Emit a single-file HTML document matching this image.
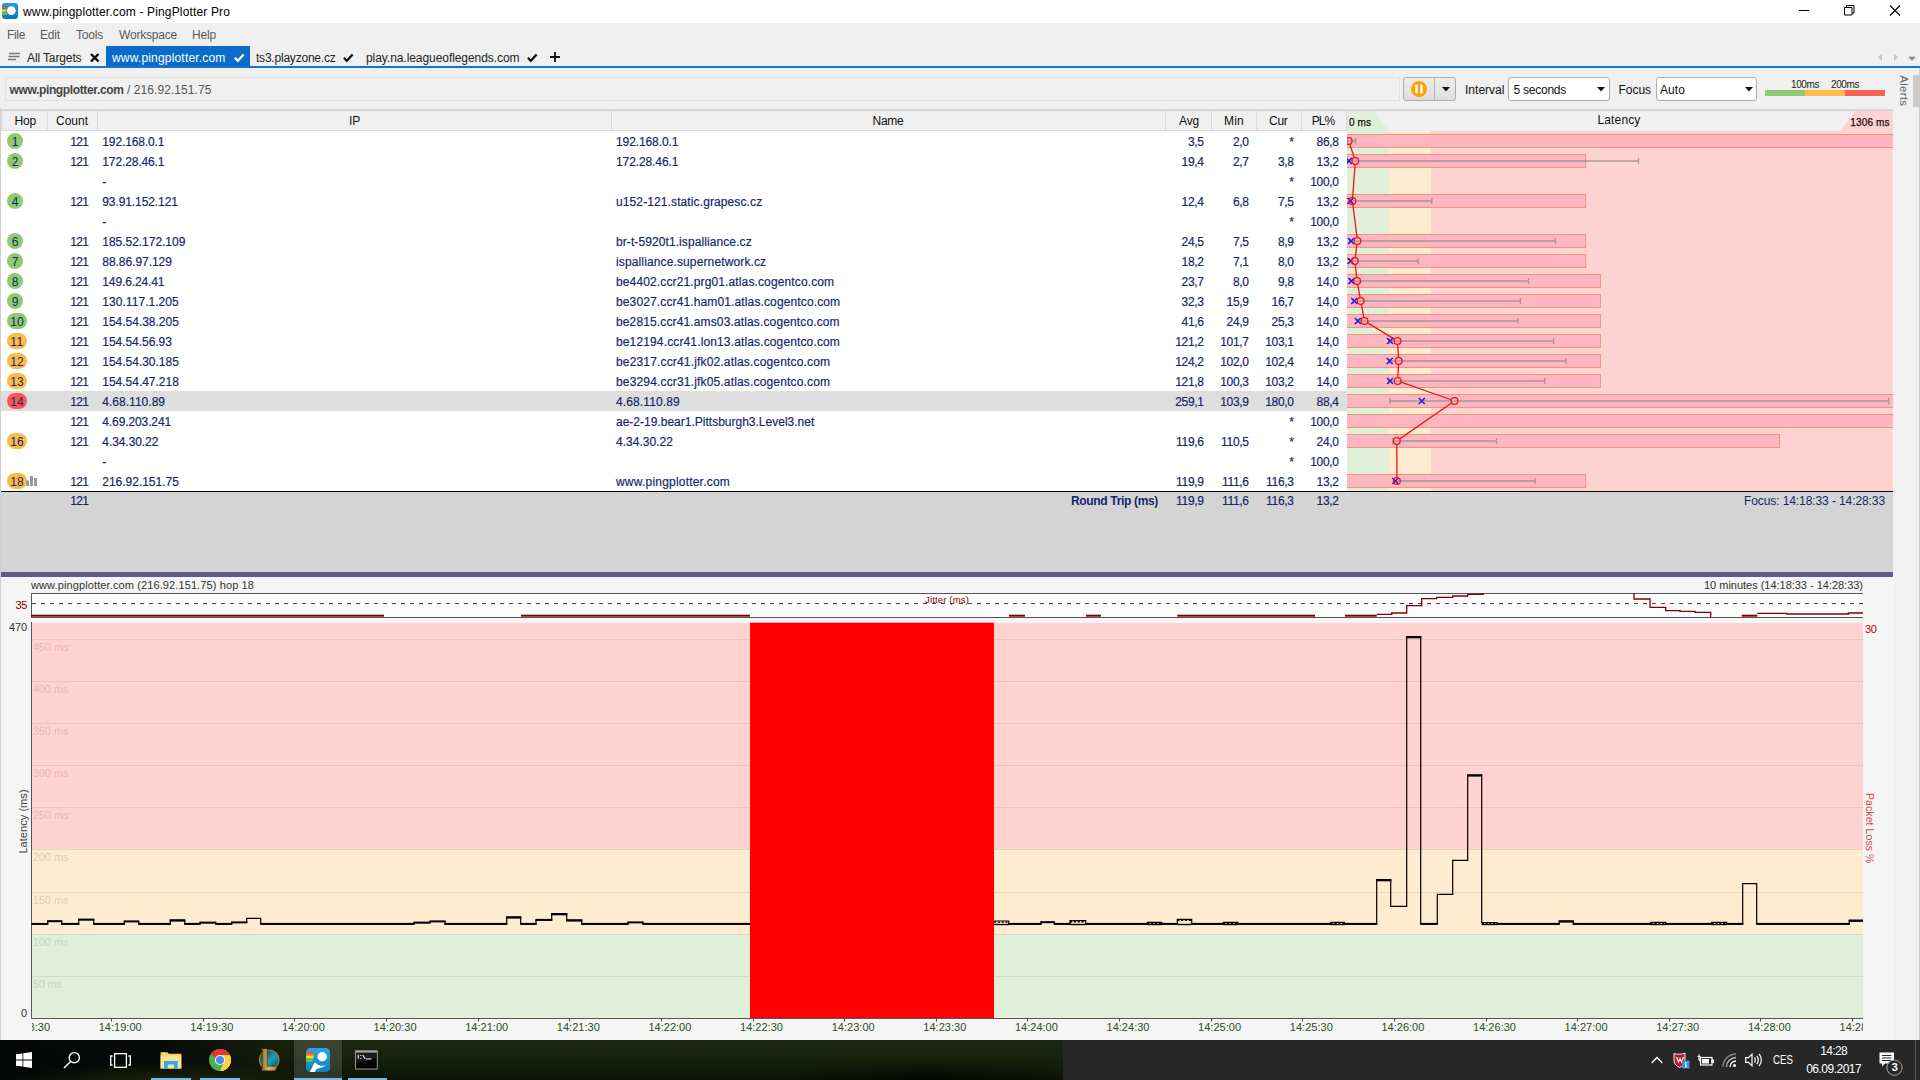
<!DOCTYPE html>
<html><head><meta charset="utf-8"><title>PingPlotter</title>
<style>
html,body{margin:0;padding:0;}
body{width:1920px;height:1080px;overflow:hidden;position:relative;background:#f0f0f0;font-family:"Liberation Sans",sans-serif;}
.t{position:absolute;white-space:nowrap;}
.b{position:absolute;}
svg{position:absolute;overflow:visible;}
</style></head><body>
<div class="b" style="left:0px;top:0px;width:1920px;height:23px;background:#fff;"></div>
<svg style="left:2px;top:3px" width="16" height="16" viewBox="0 0 16 16"><defs><linearGradient id="tg" x1="0" y1="0" x2="0" y2="1"><stop offset="0" stop-color="#1e9fdb"/><stop offset="1" stop-color="#0a78bc"/></linearGradient></defs>
<rect x="0" y="0" width="16" height="16" rx="3" fill="url(#tg)"/>
<path d="M0 3.400h5.600l-1 2.300H0z" fill="#f4511e"/><path d="M0 6.500h4.300l0 2H0z" fill="#fde910"/><path d="M0 9.300h4.400l1.200 2.700H0z" fill="#6cc04a"/>
<circle cx="9.300" cy="7.600" r="4.400" fill="#fff"/></svg>
<div class="t" style="top:3.50px;font-size:12px;line-height:16px;color:#000;letter-spacing:0.151px;left:23.00px;">www.pingplotter.com - PingPlotter Pro</div>
<svg style="left:1795px;top:0" width="125" height="23" viewBox="0 0 125 23" fill="none" stroke="#000" stroke-width="1">
<path d="M4 10.5h10"/><path d="M49.5 7.5h7.5v7.5h-7.5zM51.5 7.5v-2h7.5v7.5h-2"/><path d="M95 5.5l10 10M105 5.5l-10 10" stroke-width="1.1"/></svg>
<div class="b" style="left:0px;top:23px;width:1920px;height:43px;background:#f0f0f0;"></div>
<div class="t" style="top:27.00px;font-size:12px;line-height:16px;color:#5a5a5a;letter-spacing:-0.334px;left:7.00px;">File</div>
<div class="t" style="top:27.00px;font-size:12px;line-height:16px;color:#5a5a5a;letter-spacing:-0.170px;left:40.00px;">Edit</div>
<div class="t" style="top:27.00px;font-size:12px;line-height:16px;color:#5a5a5a;letter-spacing:-0.203px;left:76.00px;">Tools</div>
<div class="t" style="top:27.00px;font-size:12px;line-height:16px;color:#5a5a5a;letter-spacing:-0.200px;left:119.00px;">Workspace</div>
<div class="t" style="top:27.00px;font-size:12px;line-height:16px;color:#5a5a5a;letter-spacing:-0.170px;left:192.00px;">Help</div>
<svg style="left:8px;top:52px" width="13" height="10" viewBox="0 0 13 10" stroke="#777" stroke-width="1.3"><path d="M1 1.5h11M0.5 4.5h11M0 7.5h8"/></svg>
<div class="t" style="top:50.00px;font-size:12px;line-height:16px;color:#222;letter-spacing:-0.119px;left:27.00px;">All Targets</div>
<svg style="left:90px;top:53px" width="10" height="10" viewBox="0 0 10 10" stroke="#111" stroke-width="2.4"><path d="M1 1l7.5 7.5M8.5 1l-7.5 7.5"/></svg>
<div class="b" style="left:106px;top:46px;width:144px;height:21px;background:#0a6cc8;"></div>
<div class="t" style="top:50.00px;font-size:12px;line-height:16px;color:#fff;letter-spacing:0.181px;left:112.00px;">www.pingplotter.com</div>
<svg style="left:233.8px;top:52.800px" width="10.500" height="9.600" viewBox="0 0 12 11" fill="none" stroke="#fff" stroke-width="2.600"><path d="M1 5.5l3.3 3.4L11 1.8"/></svg>
<div class="t" style="top:50.00px;font-size:12px;line-height:16px;color:#222;letter-spacing:-0.214px;left:256.00px;">ts3.playzone.cz</div>
<svg style="left:342.8px;top:52.800px" width="10.500" height="9.600" viewBox="0 0 12 11" fill="none" stroke="#111" stroke-width="2.600"><path d="M1 5.5l3.3 3.4L11 1.8"/></svg>
<div class="t" style="top:50.00px;font-size:12px;line-height:16px;color:#222;letter-spacing:-0.064px;left:366.00px;">play.na.leagueoflegends.com</div>
<svg style="left:527.3px;top:52.800px" width="10.500" height="9.600" viewBox="0 0 12 11" fill="none" stroke="#111" stroke-width="2.600"><path d="M1 5.5l3.3 3.4L11 1.8"/></svg>
<svg style="left:550px;top:52px" width="10" height="10" viewBox="0 0 10 10" stroke="#111" stroke-width="1.800"><path d="M5 0v10M0 5h10"/></svg>
<svg style="left:1876px;top:52px" width="44" height="10" viewBox="0 0 44 10"><path d="M6 1.300v8L2 5.300z" fill="#c4c4c4"/><path d="M18 1.300v8l4-4z" fill="#c4c4c4"/><path d="M32 4.800h8l-4 4z" fill="#8a8a8a"/></svg>
<div class="b" style="left:0px;top:66px;width:1920px;height:2px;background:#1672cb;"></div>
<div class="b" style="left:0px;top:68px;width:1920px;height:40px;background:#f0f0f0;"></div>
<div class="b" style="left:5px;top:77px;width:1395px;height:24px;background:#f0f0f0;box-sizing:border-box;border:1px solid #e2e2e2;"></div>
<div class="t" style="top:81.50px;font-size:12px;line-height:16px;color:#444;font-weight:bold;letter-spacing:-0.363px;left:9.50px;">www.pingplotter.com</div>
<div class="t" style="top:81.50px;font-size:12px;line-height:16px;color:#555;letter-spacing:0.073px;left:127.00px;">/ 216.92.151.75</div>
<div class="b" style="left:1403px;top:77px;width:53px;height:24px;background:linear-gradient(#ededed,#dedede);box-sizing:border-box;border:1px solid #adadad;border-radius:3px;"></div>
<div class="b" style="left:1434px;top:78px;width:1px;height:22px;background:#b5b5b5;"></div>
<svg style="left:1411px;top:81px" width="16" height="16" viewBox="0 0 16 16"><circle cx="8" cy="8" r="8" fill="#fea306"/><rect x="4.3" y="3.6" width="2.5" height="8.8" rx="1" fill="#fff"/><rect x="9.2" y="3.6" width="2.5" height="8.8" rx="1" fill="#fff"/></svg>
<svg style="left:1441.5px;top:87px" width="8" height="5" viewBox="0 0 8 5"><path d="M0 0h8l-4 4.6z" fill="#111"/></svg>
<div class="t" style="top:81.50px;font-size:12px;line-height:16px;color:#111;letter-spacing:0.018px;left:1465.00px;">Interval</div>
<div class="b" style="left:1508px;top:77px;width:102px;height:24px;background:#fff;box-sizing:border-box;border:1px solid #adadad;border-radius:3px;"></div>
<div class="t" style="top:81.50px;font-size:12px;line-height:16px;color:#111;letter-spacing:-0.245px;left:1513.50px;">5 seconds</div>
<svg style="left:1597px;top:87px" width="8" height="5" viewBox="0 0 8 5"><path d="M0 0h8l-4 4.6z" fill="#111"/></svg>
<div class="t" style="top:81.50px;font-size:12px;line-height:16px;color:#111;letter-spacing:-0.036px;left:1618.50px;">Focus</div>
<div class="b" style="left:1655.5px;top:77px;width:101.5px;height:24px;background:#fff;box-sizing:border-box;border:1px solid #adadad;border-radius:3px;"></div>
<div class="t" style="top:81.50px;font-size:12px;line-height:16px;color:#111;letter-spacing:0.078px;left:1660.00px;">Auto</div>
<svg style="left:1744.5px;top:87px" width="8" height="5" viewBox="0 0 8 5"><path d="M0 0h8l-4 4.6z" fill="#111"/></svg>
<div class="b" style="left:1765px;top:90px;width:40px;height:6px;background:#93c973;"></div>
<div class="b" style="left:1805px;top:90px;width:40px;height:6px;background:#fdbc4b;"></div>
<div class="b" style="left:1845px;top:90px;width:40px;height:6px;background:#f96152;"></div>
<div class="t" style="top:77.50px;font-size:10px;line-height:14px;color:#222;letter-spacing:-0.403px;left:1805.00px;transform:translateX(-50%);">100ms</div>
<div class="t" style="top:77.50px;font-size:10px;line-height:14px;color:#222;letter-spacing:-0.403px;left:1845.00px;transform:translateX(-50%);">200ms</div>
<div class="b" style="left:1893px;top:68px;width:27px;height:972px;background:#f1f1f1;"></div>
<div class="b" style="left:1919px;top:68px;width:1px;height:972px;background:#cfcfcf;"></div>
<div class="t" style="top:82.75px;font-size:11.5px;line-height:15.5px;color:#666;letter-spacing:0.267px;left:1902.50px;transform:translateX(-50%);transform:translateX(-50%) rotate(90deg);">Alerts</div>
<div class="b" style="left:1913px;top:75px;width:7px;height:32px;background:#c9c9c9;"></div>
<div class="b" style="left:0px;top:108.6px;width:1893px;height:2.4px;background:linear-gradient(#dedede,#cfcfcf);"></div>
<div class="b" style="left:0px;top:108px;width:1px;height:932px;background:#d0d0d0;"></div>
<div class="b" style="left:1px;top:111px;width:1892px;height:20px;background:#f0f0f0;"></div>
<div class="b" style="left:1px;top:130px;width:1346px;height:1px;background:#d8d8d8;"></div>
<div class="b" style="left:47px;top:111px;width:1px;height:19px;background:#dadada;"></div>
<div class="b" style="left:97px;top:111px;width:1px;height:19px;background:#dadada;"></div>
<div class="b" style="left:611px;top:111px;width:1px;height:19px;background:#dadada;"></div>
<div class="b" style="left:1165px;top:111px;width:1px;height:19px;background:#dadada;"></div>
<div class="b" style="left:1211px;top:111px;width:1px;height:19px;background:#dadada;"></div>
<div class="b" style="left:1256px;top:111px;width:1px;height:19px;background:#dadada;"></div>
<div class="b" style="left:1301px;top:111px;width:1px;height:19px;background:#dadada;"></div>
<div class="b" style="left:1346px;top:111px;width:1px;height:19px;background:#dadada;"></div>
<div class="b" style="left:1px;top:111px;width:2px;height:19px;background:#e2e2e2;"></div>
<div class="t" style="top:112.50px;font-size:12px;line-height:16px;color:#111;letter-spacing:-0.171px;left:25.20px;transform:translateX(-50%);">Hop</div>
<div class="t" style="top:112.50px;font-size:12px;line-height:16px;color:#111;letter-spacing:-0.004px;left:72.00px;transform:translateX(-50%);">Count</div>
<div class="t" style="top:112.50px;font-size:12px;line-height:16px;color:#111;letter-spacing:-0.169px;left:354.50px;transform:translateX(-50%);">IP</div>
<div class="t" style="top:112.50px;font-size:12px;line-height:16px;color:#111;letter-spacing:-0.253px;left:888.00px;transform:translateX(-50%);">Name</div>
<div class="t" style="top:112.50px;font-size:12px;line-height:16px;color:#111;letter-spacing:-0.154px;left:1189.00px;transform:translateX(-50%);">Avg</div>
<div class="t" style="top:112.50px;font-size:12px;line-height:16px;color:#111;letter-spacing:0.221px;left:1234.00px;transform:translateX(-50%);">Min</div>
<div class="t" style="top:112.50px;font-size:12px;line-height:16px;color:#111;letter-spacing:-0.279px;left:1278.30px;transform:translateX(-50%);">Cur</div>
<div class="t" style="top:112.50px;font-size:12px;line-height:16px;color:#111;letter-spacing:-0.949px;left:1323.00px;transform:translateX(-50%);">PL%</div>
<div class="b" style="left:1px;top:131px;width:1346px;height:360px;background:#fff;"></div>
<div class="b" style="left:1px;top:391px;width:1346px;height:20px;background:#dedede;"></div>
<div class="b" style="left:7px;top:133px;width:16px;height:16px;background:#90c96f;border-radius:8px;"></div>
<div class="t" style="top:134.00px;font-size:12px;line-height:16px;color:#15266c;left:15.00px;transform:translateX(-50%);">1</div>
<div class="t" style="top:134.00px;font-size:12px;line-height:16px;color:#15266c;letter-spacing:-0.607px;right:1831.60px;-webkit-text-stroke:0.18px #15266c;">121</div>
<div class="t" style="top:134.00px;font-size:12px;line-height:16px;color:#15266c;letter-spacing:-0.127px;left:102.30px;-webkit-text-stroke:0.18px #15266c;">192.168.0.1</div>
<div class="t" style="top:134.00px;font-size:12px;line-height:16px;color:#15266c;letter-spacing:-0.104px;left:616.00px;-webkit-text-stroke:0.18px #15266c;">192.168.0.1</div>
<div class="t" style="top:134.00px;font-size:12px;line-height:16px;color:#15266c;right:716.40px;letter-spacing:-0.32px;-webkit-text-stroke:0.18px #15266c;">3,5</div>
<div class="t" style="top:134.00px;font-size:12px;line-height:16px;color:#15266c;right:671.40px;letter-spacing:-0.32px;-webkit-text-stroke:0.18px #15266c;">2,0</div>
<div class="t" style="top:134.00px;font-size:12px;line-height:16px;color:#15266c;right:626.40px;letter-spacing:-0.32px;-webkit-text-stroke:0.18px #15266c;">*</div>
<div class="t" style="top:134.00px;font-size:12px;line-height:16px;color:#15266c;right:581.40px;letter-spacing:-0.32px;-webkit-text-stroke:0.18px #15266c;">86,8</div>
<div class="b" style="left:7px;top:153px;width:16px;height:16px;background:#90c96f;border-radius:8px;"></div>
<div class="t" style="top:154.00px;font-size:12px;line-height:16px;color:#15266c;left:15.00px;transform:translateX(-50%);">2</div>
<div class="t" style="top:154.00px;font-size:12px;line-height:16px;color:#15266c;letter-spacing:-0.607px;right:1831.60px;-webkit-text-stroke:0.18px #15266c;">121</div>
<div class="t" style="top:154.00px;font-size:12px;line-height:16px;color:#15266c;letter-spacing:-0.127px;left:102.30px;-webkit-text-stroke:0.18px #15266c;">172.28.46.1</div>
<div class="t" style="top:154.00px;font-size:12px;line-height:16px;color:#15266c;letter-spacing:-0.104px;left:616.00px;-webkit-text-stroke:0.18px #15266c;">172.28.46.1</div>
<div class="t" style="top:154.00px;font-size:12px;line-height:16px;color:#15266c;right:716.40px;letter-spacing:-0.32px;-webkit-text-stroke:0.18px #15266c;">19,4</div>
<div class="t" style="top:154.00px;font-size:12px;line-height:16px;color:#15266c;right:671.40px;letter-spacing:-0.32px;-webkit-text-stroke:0.18px #15266c;">2,7</div>
<div class="t" style="top:154.00px;font-size:12px;line-height:16px;color:#15266c;right:626.40px;letter-spacing:-0.32px;-webkit-text-stroke:0.18px #15266c;">3,8</div>
<div class="t" style="top:154.00px;font-size:12px;line-height:16px;color:#15266c;right:581.40px;letter-spacing:-0.32px;-webkit-text-stroke:0.18px #15266c;">13,2</div>
<div class="t" style="top:174.00px;font-size:12px;line-height:16px;color:#15266c;left:102.30px;-webkit-text-stroke:0.18px #15266c;">-</div>
<div class="t" style="top:174.00px;font-size:12px;line-height:16px;color:#15266c;right:626.40px;letter-spacing:-0.32px;-webkit-text-stroke:0.18px #15266c;">*</div>
<div class="t" style="top:174.00px;font-size:12px;line-height:16px;color:#15266c;right:581.40px;letter-spacing:-0.32px;-webkit-text-stroke:0.18px #15266c;">100,0</div>
<div class="b" style="left:7px;top:193px;width:16px;height:16px;background:#90c96f;border-radius:8px;"></div>
<div class="t" style="top:194.00px;font-size:12px;line-height:16px;color:#15266c;left:15.00px;transform:translateX(-50%);">4</div>
<div class="t" style="top:194.00px;font-size:12px;line-height:16px;color:#15266c;letter-spacing:-0.607px;right:1831.60px;-webkit-text-stroke:0.18px #15266c;">121</div>
<div class="t" style="top:194.00px;font-size:12px;line-height:16px;color:#15266c;letter-spacing:-0.096px;left:102.30px;-webkit-text-stroke:0.18px #15266c;">93.91.152.121</div>
<div class="t" style="top:194.00px;font-size:12px;line-height:16px;color:#15266c;letter-spacing:0.109px;left:616.00px;-webkit-text-stroke:0.18px #15266c;">u152-121.static.grapesc.cz</div>
<div class="t" style="top:194.00px;font-size:12px;line-height:16px;color:#15266c;right:716.40px;letter-spacing:-0.32px;-webkit-text-stroke:0.18px #15266c;">12,4</div>
<div class="t" style="top:194.00px;font-size:12px;line-height:16px;color:#15266c;right:671.40px;letter-spacing:-0.32px;-webkit-text-stroke:0.18px #15266c;">6,8</div>
<div class="t" style="top:194.00px;font-size:12px;line-height:16px;color:#15266c;right:626.40px;letter-spacing:-0.32px;-webkit-text-stroke:0.18px #15266c;">7,5</div>
<div class="t" style="top:194.00px;font-size:12px;line-height:16px;color:#15266c;right:581.40px;letter-spacing:-0.32px;-webkit-text-stroke:0.18px #15266c;">13,2</div>
<div class="t" style="top:214.00px;font-size:12px;line-height:16px;color:#15266c;left:102.30px;-webkit-text-stroke:0.18px #15266c;">-</div>
<div class="t" style="top:214.00px;font-size:12px;line-height:16px;color:#15266c;right:626.40px;letter-spacing:-0.32px;-webkit-text-stroke:0.18px #15266c;">*</div>
<div class="t" style="top:214.00px;font-size:12px;line-height:16px;color:#15266c;right:581.40px;letter-spacing:-0.32px;-webkit-text-stroke:0.18px #15266c;">100,0</div>
<div class="b" style="left:7px;top:233px;width:16px;height:16px;background:#90c96f;border-radius:8px;"></div>
<div class="t" style="top:234.00px;font-size:12px;line-height:16px;color:#15266c;left:15.00px;transform:translateX(-50%);">6</div>
<div class="t" style="top:234.00px;font-size:12px;line-height:16px;color:#15266c;letter-spacing:-0.607px;right:1831.60px;-webkit-text-stroke:0.18px #15266c;">121</div>
<div class="t" style="top:234.00px;font-size:12px;line-height:16px;color:#15266c;letter-spacing:-0.030px;left:102.30px;-webkit-text-stroke:0.18px #15266c;">185.52.172.109</div>
<div class="t" style="top:234.00px;font-size:12px;line-height:16px;color:#15266c;letter-spacing:0.090px;left:616.00px;-webkit-text-stroke:0.18px #15266c;">br-t-5920t1.ispalliance.cz</div>
<div class="t" style="top:234.00px;font-size:12px;line-height:16px;color:#15266c;right:716.40px;letter-spacing:-0.32px;-webkit-text-stroke:0.18px #15266c;">24,5</div>
<div class="t" style="top:234.00px;font-size:12px;line-height:16px;color:#15266c;right:671.40px;letter-spacing:-0.32px;-webkit-text-stroke:0.18px #15266c;">7,5</div>
<div class="t" style="top:234.00px;font-size:12px;line-height:16px;color:#15266c;right:626.40px;letter-spacing:-0.32px;-webkit-text-stroke:0.18px #15266c;">8,9</div>
<div class="t" style="top:234.00px;font-size:12px;line-height:16px;color:#15266c;right:581.40px;letter-spacing:-0.32px;-webkit-text-stroke:0.18px #15266c;">13,2</div>
<div class="b" style="left:7px;top:253px;width:16px;height:16px;background:#90c96f;border-radius:8px;"></div>
<div class="t" style="top:254.00px;font-size:12px;line-height:16px;color:#15266c;left:15.00px;transform:translateX(-50%);">7</div>
<div class="t" style="top:254.00px;font-size:12px;line-height:16px;color:#15266c;letter-spacing:-0.607px;right:1831.60px;-webkit-text-stroke:0.18px #15266c;">121</div>
<div class="t" style="top:254.00px;font-size:12px;line-height:16px;color:#15266c;letter-spacing:-0.047px;left:102.30px;-webkit-text-stroke:0.18px #15266c;">88.86.97.129</div>
<div class="t" style="top:254.00px;font-size:12px;line-height:16px;color:#15266c;letter-spacing:0.130px;left:616.00px;-webkit-text-stroke:0.18px #15266c;">ispalliance.supernetwork.cz</div>
<div class="t" style="top:254.00px;font-size:12px;line-height:16px;color:#15266c;right:716.40px;letter-spacing:-0.32px;-webkit-text-stroke:0.18px #15266c;">18,2</div>
<div class="t" style="top:254.00px;font-size:12px;line-height:16px;color:#15266c;right:671.40px;letter-spacing:-0.32px;-webkit-text-stroke:0.18px #15266c;">7,1</div>
<div class="t" style="top:254.00px;font-size:12px;line-height:16px;color:#15266c;right:626.40px;letter-spacing:-0.32px;-webkit-text-stroke:0.18px #15266c;">8,0</div>
<div class="t" style="top:254.00px;font-size:12px;line-height:16px;color:#15266c;right:581.40px;letter-spacing:-0.32px;-webkit-text-stroke:0.18px #15266c;">13,2</div>
<div class="b" style="left:7px;top:273px;width:16px;height:16px;background:#90c96f;border-radius:8px;"></div>
<div class="t" style="top:274.00px;font-size:12px;line-height:16px;color:#15266c;left:15.00px;transform:translateX(-50%);">8</div>
<div class="t" style="top:274.00px;font-size:12px;line-height:16px;color:#15266c;letter-spacing:-0.607px;right:1831.60px;-webkit-text-stroke:0.18px #15266c;">121</div>
<div class="t" style="top:274.00px;font-size:12px;line-height:16px;color:#15266c;letter-spacing:-0.127px;left:102.30px;-webkit-text-stroke:0.18px #15266c;">149.6.24.41</div>
<div class="t" style="top:274.00px;font-size:12px;line-height:16px;color:#15266c;letter-spacing:0.129px;left:616.00px;-webkit-text-stroke:0.18px #15266c;">be4402.ccr21.prg01.atlas.cogentco.com</div>
<div class="t" style="top:274.00px;font-size:12px;line-height:16px;color:#15266c;right:716.40px;letter-spacing:-0.32px;-webkit-text-stroke:0.18px #15266c;">23,7</div>
<div class="t" style="top:274.00px;font-size:12px;line-height:16px;color:#15266c;right:671.40px;letter-spacing:-0.32px;-webkit-text-stroke:0.18px #15266c;">8,0</div>
<div class="t" style="top:274.00px;font-size:12px;line-height:16px;color:#15266c;right:626.40px;letter-spacing:-0.32px;-webkit-text-stroke:0.18px #15266c;">9,8</div>
<div class="t" style="top:274.00px;font-size:12px;line-height:16px;color:#15266c;right:581.40px;letter-spacing:-0.32px;-webkit-text-stroke:0.18px #15266c;">14,0</div>
<div class="b" style="left:7px;top:293px;width:16px;height:16px;background:#90c96f;border-radius:8px;"></div>
<div class="t" style="top:294.00px;font-size:12px;line-height:16px;color:#15266c;left:15.00px;transform:translateX(-50%);">9</div>
<div class="t" style="top:294.00px;font-size:12px;line-height:16px;color:#15266c;letter-spacing:-0.607px;right:1831.60px;-webkit-text-stroke:0.18px #15266c;">121</div>
<div class="t" style="top:294.00px;font-size:12px;line-height:16px;color:#15266c;letter-spacing:0.050px;left:102.30px;-webkit-text-stroke:0.18px #15266c;">130.117.1.205</div>
<div class="t" style="top:294.00px;font-size:12px;line-height:16px;color:#15266c;letter-spacing:0.129px;left:616.00px;-webkit-text-stroke:0.18px #15266c;">be3027.ccr41.ham01.atlas.cogentco.com</div>
<div class="t" style="top:294.00px;font-size:12px;line-height:16px;color:#15266c;right:716.40px;letter-spacing:-0.32px;-webkit-text-stroke:0.18px #15266c;">32,3</div>
<div class="t" style="top:294.00px;font-size:12px;line-height:16px;color:#15266c;right:671.40px;letter-spacing:-0.32px;-webkit-text-stroke:0.18px #15266c;">15,9</div>
<div class="t" style="top:294.00px;font-size:12px;line-height:16px;color:#15266c;right:626.40px;letter-spacing:-0.32px;-webkit-text-stroke:0.18px #15266c;">16,7</div>
<div class="t" style="top:294.00px;font-size:12px;line-height:16px;color:#15266c;right:581.40px;letter-spacing:-0.32px;-webkit-text-stroke:0.18px #15266c;">14,0</div>
<div class="b" style="left:7px;top:313px;width:20px;height:16px;background:#90c96f;border-radius:8px;"></div>
<div class="t" style="top:314.00px;font-size:12px;line-height:16px;color:#15266c;letter-spacing:0.076px;left:17.00px;transform:translateX(-50%);">10</div>
<div class="t" style="top:314.00px;font-size:12px;line-height:16px;color:#15266c;letter-spacing:-0.607px;right:1831.60px;-webkit-text-stroke:0.18px #15266c;">121</div>
<div class="t" style="top:314.00px;font-size:12px;line-height:16px;color:#15266c;letter-spacing:-0.019px;left:102.30px;-webkit-text-stroke:0.18px #15266c;">154.54.38.205</div>
<div class="t" style="top:314.00px;font-size:12px;line-height:16px;color:#15266c;letter-spacing:0.134px;left:616.00px;-webkit-text-stroke:0.18px #15266c;">be2815.ccr41.ams03.atlas.cogentco.com</div>
<div class="t" style="top:314.00px;font-size:12px;line-height:16px;color:#15266c;right:716.40px;letter-spacing:-0.32px;-webkit-text-stroke:0.18px #15266c;">41,6</div>
<div class="t" style="top:314.00px;font-size:12px;line-height:16px;color:#15266c;right:671.40px;letter-spacing:-0.32px;-webkit-text-stroke:0.18px #15266c;">24,9</div>
<div class="t" style="top:314.00px;font-size:12px;line-height:16px;color:#15266c;right:626.40px;letter-spacing:-0.32px;-webkit-text-stroke:0.18px #15266c;">25,3</div>
<div class="t" style="top:314.00px;font-size:12px;line-height:16px;color:#15266c;right:581.40px;letter-spacing:-0.32px;-webkit-text-stroke:0.18px #15266c;">14,0</div>
<div class="b" style="left:7px;top:333px;width:20px;height:16px;background:#fdbb45;border-radius:8px;"></div>
<div class="t" style="top:334.00px;font-size:12px;line-height:16px;color:#15266c;letter-spacing:0.521px;left:17.00px;transform:translateX(-50%);">11</div>
<div class="t" style="top:334.00px;font-size:12px;line-height:16px;color:#15266c;letter-spacing:-0.607px;right:1831.60px;-webkit-text-stroke:0.18px #15266c;">121</div>
<div class="t" style="top:334.00px;font-size:12px;line-height:16px;color:#15266c;letter-spacing:-0.047px;left:102.30px;-webkit-text-stroke:0.18px #15266c;">154.54.56.93</div>
<div class="t" style="top:334.00px;font-size:12px;line-height:16px;color:#15266c;letter-spacing:0.136px;left:616.00px;-webkit-text-stroke:0.18px #15266c;">be12194.ccr41.lon13.atlas.cogentco.com</div>
<div class="t" style="top:334.00px;font-size:12px;line-height:16px;color:#15266c;right:716.40px;letter-spacing:-0.32px;-webkit-text-stroke:0.18px #15266c;">121,2</div>
<div class="t" style="top:334.00px;font-size:12px;line-height:16px;color:#15266c;right:671.40px;letter-spacing:-0.32px;-webkit-text-stroke:0.18px #15266c;">101,7</div>
<div class="t" style="top:334.00px;font-size:12px;line-height:16px;color:#15266c;right:626.40px;letter-spacing:-0.32px;-webkit-text-stroke:0.18px #15266c;">103,1</div>
<div class="t" style="top:334.00px;font-size:12px;line-height:16px;color:#15266c;right:581.40px;letter-spacing:-0.32px;-webkit-text-stroke:0.18px #15266c;">14,0</div>
<div class="b" style="left:7px;top:353px;width:20px;height:16px;background:#fdbb45;border-radius:8px;"></div>
<div class="t" style="top:354.00px;font-size:12px;line-height:16px;color:#15266c;letter-spacing:0.076px;left:17.00px;transform:translateX(-50%);">12</div>
<div class="t" style="top:354.00px;font-size:12px;line-height:16px;color:#15266c;letter-spacing:-0.607px;right:1831.60px;-webkit-text-stroke:0.18px #15266c;">121</div>
<div class="t" style="top:354.00px;font-size:12px;line-height:16px;color:#15266c;letter-spacing:-0.019px;left:102.30px;-webkit-text-stroke:0.18px #15266c;">154.54.30.185</div>
<div class="t" style="top:354.00px;font-size:12px;line-height:16px;color:#15266c;letter-spacing:0.164px;left:616.00px;-webkit-text-stroke:0.18px #15266c;">be2317.ccr41.jfk02.atlas.cogentco.com</div>
<div class="t" style="top:354.00px;font-size:12px;line-height:16px;color:#15266c;right:716.40px;letter-spacing:-0.32px;-webkit-text-stroke:0.18px #15266c;">124,2</div>
<div class="t" style="top:354.00px;font-size:12px;line-height:16px;color:#15266c;right:671.40px;letter-spacing:-0.32px;-webkit-text-stroke:0.18px #15266c;">102,0</div>
<div class="t" style="top:354.00px;font-size:12px;line-height:16px;color:#15266c;right:626.40px;letter-spacing:-0.32px;-webkit-text-stroke:0.18px #15266c;">102,4</div>
<div class="t" style="top:354.00px;font-size:12px;line-height:16px;color:#15266c;right:581.40px;letter-spacing:-0.32px;-webkit-text-stroke:0.18px #15266c;">14,0</div>
<div class="b" style="left:7px;top:373px;width:20px;height:16px;background:#fdbb45;border-radius:8px;"></div>
<div class="t" style="top:374.00px;font-size:12px;line-height:16px;color:#15266c;letter-spacing:0.076px;left:17.00px;transform:translateX(-50%);">13</div>
<div class="t" style="top:374.00px;font-size:12px;line-height:16px;color:#15266c;letter-spacing:-0.607px;right:1831.60px;-webkit-text-stroke:0.18px #15266c;">121</div>
<div class="t" style="top:374.00px;font-size:12px;line-height:16px;color:#15266c;letter-spacing:-0.019px;left:102.30px;-webkit-text-stroke:0.18px #15266c;">154.54.47.218</div>
<div class="t" style="top:374.00px;font-size:12px;line-height:16px;color:#15266c;letter-spacing:0.164px;left:616.00px;-webkit-text-stroke:0.18px #15266c;">be3294.ccr31.jfk05.atlas.cogentco.com</div>
<div class="t" style="top:374.00px;font-size:12px;line-height:16px;color:#15266c;right:716.40px;letter-spacing:-0.32px;-webkit-text-stroke:0.18px #15266c;">121,8</div>
<div class="t" style="top:374.00px;font-size:12px;line-height:16px;color:#15266c;right:671.40px;letter-spacing:-0.32px;-webkit-text-stroke:0.18px #15266c;">100,3</div>
<div class="t" style="top:374.00px;font-size:12px;line-height:16px;color:#15266c;right:626.40px;letter-spacing:-0.32px;-webkit-text-stroke:0.18px #15266c;">103,2</div>
<div class="t" style="top:374.00px;font-size:12px;line-height:16px;color:#15266c;right:581.40px;letter-spacing:-0.32px;-webkit-text-stroke:0.18px #15266c;">14,0</div>
<div class="b" style="left:7px;top:393px;width:20px;height:16px;background:#f9594f;border-radius:8px;"></div>
<div class="t" style="top:394.00px;font-size:12px;line-height:16px;color:#15266c;letter-spacing:0.076px;left:17.00px;transform:translateX(-50%);">14</div>
<div class="t" style="top:394.00px;font-size:12px;line-height:16px;color:#15266c;letter-spacing:-0.607px;right:1831.60px;-webkit-text-stroke:0.18px #15266c;">121</div>
<div class="t" style="top:394.00px;font-size:12px;line-height:16px;color:#15266c;letter-spacing:0.022px;left:102.30px;-webkit-text-stroke:0.18px #15266c;">4.68.110.89</div>
<div class="t" style="top:394.00px;font-size:12px;line-height:16px;color:#15266c;letter-spacing:0.109px;left:616.00px;-webkit-text-stroke:0.18px #15266c;">4.68.110.89</div>
<div class="t" style="top:394.00px;font-size:12px;line-height:16px;color:#15266c;right:716.40px;letter-spacing:-0.32px;-webkit-text-stroke:0.18px #15266c;">259,1</div>
<div class="t" style="top:394.00px;font-size:12px;line-height:16px;color:#15266c;right:671.40px;letter-spacing:-0.32px;-webkit-text-stroke:0.18px #15266c;">103,9</div>
<div class="t" style="top:394.00px;font-size:12px;line-height:16px;color:#15266c;right:626.40px;letter-spacing:-0.32px;-webkit-text-stroke:0.18px #15266c;">180,0</div>
<div class="t" style="top:394.00px;font-size:12px;line-height:16px;color:#15266c;right:581.40px;letter-spacing:-0.32px;-webkit-text-stroke:0.18px #15266c;">88,4</div>
<div class="t" style="top:414.00px;font-size:12px;line-height:16px;color:#15266c;letter-spacing:-0.607px;right:1831.60px;-webkit-text-stroke:0.18px #15266c;">121</div>
<div class="t" style="top:414.00px;font-size:12px;line-height:16px;color:#15266c;letter-spacing:-0.110px;left:102.30px;-webkit-text-stroke:0.18px #15266c;">4.69.203.241</div>
<div class="t" style="top:414.00px;font-size:12px;line-height:16px;color:#15266c;letter-spacing:0.004px;left:616.00px;-webkit-text-stroke:0.18px #15266c;">ae-2-19.bear1.Pittsburgh3.Level3.net</div>
<div class="t" style="top:414.00px;font-size:12px;line-height:16px;color:#15266c;right:626.40px;letter-spacing:-0.32px;-webkit-text-stroke:0.18px #15266c;">*</div>
<div class="t" style="top:414.00px;font-size:12px;line-height:16px;color:#15266c;right:581.40px;letter-spacing:-0.32px;-webkit-text-stroke:0.18px #15266c;">100,0</div>
<div class="b" style="left:7px;top:433px;width:20px;height:16px;background:#fdbb45;border-radius:8px;"></div>
<div class="t" style="top:434.00px;font-size:12px;line-height:16px;color:#15266c;letter-spacing:0.076px;left:17.00px;transform:translateX(-50%);">16</div>
<div class="t" style="top:434.00px;font-size:12px;line-height:16px;color:#15266c;letter-spacing:-0.607px;right:1831.60px;-webkit-text-stroke:0.18px #15266c;">121</div>
<div class="t" style="top:434.00px;font-size:12px;line-height:16px;color:#15266c;letter-spacing:-0.072px;left:102.30px;-webkit-text-stroke:0.18px #15266c;">4.34.30.22</div>
<div class="t" style="top:434.00px;font-size:12px;line-height:16px;color:#15266c;letter-spacing:0.028px;left:616.00px;-webkit-text-stroke:0.18px #15266c;">4.34.30.22</div>
<div class="t" style="top:434.00px;font-size:12px;line-height:16px;color:#15266c;right:716.40px;letter-spacing:-0.32px;-webkit-text-stroke:0.18px #15266c;">119,6</div>
<div class="t" style="top:434.00px;font-size:12px;line-height:16px;color:#15266c;right:671.40px;letter-spacing:-0.32px;-webkit-text-stroke:0.18px #15266c;">110,5</div>
<div class="t" style="top:434.00px;font-size:12px;line-height:16px;color:#15266c;right:626.40px;letter-spacing:-0.32px;-webkit-text-stroke:0.18px #15266c;">*</div>
<div class="t" style="top:434.00px;font-size:12px;line-height:16px;color:#15266c;right:581.40px;letter-spacing:-0.32px;-webkit-text-stroke:0.18px #15266c;">24,0</div>
<div class="t" style="top:454.00px;font-size:12px;line-height:16px;color:#15266c;left:102.30px;-webkit-text-stroke:0.18px #15266c;">-</div>
<div class="t" style="top:454.00px;font-size:12px;line-height:16px;color:#15266c;right:626.40px;letter-spacing:-0.32px;-webkit-text-stroke:0.18px #15266c;">*</div>
<div class="t" style="top:454.00px;font-size:12px;line-height:16px;color:#15266c;right:581.40px;letter-spacing:-0.32px;-webkit-text-stroke:0.18px #15266c;">100,0</div>
<div class="b" style="left:7px;top:473px;width:20px;height:16px;background:#fdbb45;border-radius:8px;"></div>
<div class="t" style="top:474.00px;font-size:12px;line-height:16px;color:#15266c;letter-spacing:0.076px;left:17.00px;transform:translateX(-50%);">18</div>
<div class="t" style="top:474.00px;font-size:12px;line-height:16px;color:#15266c;letter-spacing:-0.607px;right:1831.60px;-webkit-text-stroke:0.18px #15266c;">121</div>
<div class="t" style="top:474.00px;font-size:12px;line-height:16px;color:#15266c;letter-spacing:-0.019px;left:102.30px;-webkit-text-stroke:0.18px #15266c;">216.92.151.75</div>
<div class="t" style="top:474.00px;font-size:12px;line-height:16px;color:#15266c;letter-spacing:0.208px;left:616.00px;-webkit-text-stroke:0.18px #15266c;">www.pingplotter.com</div>
<div class="t" style="top:474.00px;font-size:12px;line-height:16px;color:#15266c;right:716.40px;letter-spacing:-0.32px;-webkit-text-stroke:0.18px #15266c;">119,9</div>
<div class="t" style="top:474.00px;font-size:12px;line-height:16px;color:#15266c;right:671.40px;letter-spacing:-0.32px;-webkit-text-stroke:0.18px #15266c;">111,6</div>
<div class="t" style="top:474.00px;font-size:12px;line-height:16px;color:#15266c;right:626.40px;letter-spacing:-0.32px;-webkit-text-stroke:0.18px #15266c;">116,3</div>
<div class="t" style="top:474.00px;font-size:12px;line-height:16px;color:#15266c;right:581.40px;letter-spacing:-0.32px;-webkit-text-stroke:0.18px #15266c;">13,2</div>
<svg style="left:26px;top:476px" width="12" height="10" viewBox="0 0 12 10" fill="#999"><rect x="0" y="4.5" width="3" height="5.5"/><rect x="4" y="0" width="3" height="10"/><rect x="8" y="2" width="3" height="8"/></svg>
<div class="b" style="left:1px;top:491px;width:1892px;height:1px;background:#000;"></div>
<div class="b" style="left:1px;top:492px;width:1892px;height:80px;background:#d4d4d4;"></div>
<div class="t" style="top:492.50px;font-size:12px;line-height:16px;color:#15266c;letter-spacing:-0.607px;right:1831.60px;-webkit-text-stroke:0.18px #15266c;">121</div>
<div class="t" style="top:492.50px;font-size:12px;line-height:16px;color:#15266c;font-weight:bold;letter-spacing:-0.333px;right:762.00px;">Round Trip (ms)</div>
<div class="t" style="top:492.50px;font-size:12px;line-height:16px;color:#15266c;right:716.40px;letter-spacing:-0.32px;-webkit-text-stroke:0.18px #15266c;">119,9</div>
<div class="t" style="top:492.50px;font-size:12px;line-height:16px;color:#15266c;right:671.40px;letter-spacing:-0.32px;-webkit-text-stroke:0.18px #15266c;">111,6</div>
<div class="t" style="top:492.50px;font-size:12px;line-height:16px;color:#15266c;right:626.40px;letter-spacing:-0.32px;-webkit-text-stroke:0.18px #15266c;">116,3</div>
<div class="t" style="top:492.50px;font-size:12px;line-height:16px;color:#15266c;right:581.40px;letter-spacing:-0.32px;-webkit-text-stroke:0.18px #15266c;">13,2</div>
<div class="t" style="top:492.50px;font-size:12px;line-height:16px;color:#15266c;letter-spacing:-0.094px;right:35.00px;">Focus: 14:18:33 - 14:28:33</div>
<div class="b" style="left:1px;top:572.4px;width:1892px;height:4.7px;background:#5d5d87;"></div>
<div class="b" style="left:1347px;top:131px;width:546px;height:360px;background:#ffd3cf;"></div>
<div class="b" style="left:1347px;top:131px;width:41.8px;height:360px;background:#e0f0d8;"></div>
<div class="b" style="left:1388.8px;top:131px;width:42.2px;height:360px;background:#ffebcf;"></div>
<svg style="left:1347px;top:111px" width="546" height="20" viewBox="0 0 546 20"><path d="M0 0h27l14.800 20H0z" fill="#e0f0d8"/><path d="M546 0h-37.700l-15.300 20h53z" fill="#ffd3cf"/></svg>
<div class="t" style="top:116.00px;font-size:10px;line-height:14px;color:#111;letter-spacing:0.132px;left:1349.00px;-webkit-text-stroke:0.25px #111;">0 ms</div>
<div class="t" style="top:116.30px;font-size:10px;line-height:14px;color:#111;letter-spacing:0.135px;right:30.40px;-webkit-text-stroke:0.25px #111;">1306 ms</div>
<div class="t" style="top:111.60px;font-size:12px;line-height:16px;color:#111;letter-spacing:0.139px;left:1619.00px;transform:translateX(-50%);">Latency</div>
<svg style="left:1347px;top:131px;overflow:hidden" width="546" height="360" viewBox="0 0 546 360"><rect x="-0.5" y="3.5" width="547.5" height="13" fill="#ffb6c1" stroke="#e9967a" stroke-width="1"/><rect x="-0.5" y="23.5" width="239.1" height="13" fill="#ffb6c1" stroke="#e9967a" stroke-width="1"/><rect x="-0.5" y="63.5" width="239.1" height="13" fill="#ffb6c1" stroke="#e9967a" stroke-width="1"/><rect x="-0.5" y="103.5" width="239.1" height="13" fill="#ffb6c1" stroke="#e9967a" stroke-width="1"/><rect x="-0.5" y="123.5" width="239.1" height="13" fill="#ffb6c1" stroke="#e9967a" stroke-width="1"/><rect x="-0.5" y="143.5" width="253.9" height="13" fill="#ffb6c1" stroke="#e9967a" stroke-width="1"/><rect x="-0.5" y="163.5" width="253.9" height="13" fill="#ffb6c1" stroke="#e9967a" stroke-width="1"/><rect x="-0.5" y="183.5" width="253.9" height="13" fill="#ffb6c1" stroke="#e9967a" stroke-width="1"/><rect x="-0.5" y="203.5" width="253.9" height="13" fill="#ffb6c1" stroke="#e9967a" stroke-width="1"/><rect x="-0.5" y="223.5" width="253.9" height="13" fill="#ffb6c1" stroke="#e9967a" stroke-width="1"/><rect x="-0.5" y="243.5" width="253.9" height="13" fill="#ffb6c1" stroke="#e9967a" stroke-width="1"/><rect x="-0.5" y="263.5" width="547.5" height="13" fill="#ffb6c1" stroke="#e9967a" stroke-width="1"/><rect x="-0.5" y="283.5" width="547.5" height="13" fill="#ffb6c1" stroke="#e9967a" stroke-width="1"/><rect x="-0.5" y="303.5" width="433.1" height="13" fill="#ffb6c1" stroke="#e9967a" stroke-width="1"/><rect x="-0.5" y="343.5" width="239.1" height="13" fill="#ffb6c1" stroke="#e9967a" stroke-width="1"/><path d="M0.5 9.95H8.6M0.5 6.95v6M8.6 6.95v6" stroke="#8a8a8a" stroke-opacity="0.75" stroke-width="1.4" fill="none"/><path d="M0.8 29.95H291.5M0.8 26.95v6M291.5 26.95v6" stroke="#8a8a8a" stroke-opacity="0.75" stroke-width="1.4" fill="none"/><path d="M2.5 69.95H84.8M2.5 66.95v6M84.8 66.95v6" stroke="#8a8a8a" stroke-opacity="0.75" stroke-width="1.4" fill="none"/><path d="M2.8 109.95H208.4M2.8 106.95v6M208.4 106.95v6" stroke="#8a8a8a" stroke-opacity="0.75" stroke-width="1.4" fill="none"/><path d="M2.7 129.95H71.2M2.7 126.95v6M71.2 126.95v6" stroke="#8a8a8a" stroke-opacity="0.75" stroke-width="1.4" fill="none"/><path d="M3.0 149.95H181.5M3.0 146.95v6M181.5 146.95v6" stroke="#8a8a8a" stroke-opacity="0.75" stroke-width="1.4" fill="none"/><path d="M6.3 169.95H173.4M6.3 166.95v6M173.4 166.95v6" stroke="#8a8a8a" stroke-opacity="0.75" stroke-width="1.4" fill="none"/><path d="M10.1 189.95H170.9M10.1 186.95v6M170.9 186.95v6" stroke="#8a8a8a" stroke-opacity="0.75" stroke-width="1.4" fill="none"/><path d="M42.2 209.95H206.6M42.2 206.95v6M206.6 206.95v6" stroke="#8a8a8a" stroke-opacity="0.75" stroke-width="1.4" fill="none"/><path d="M42.3 229.95H219.0M42.3 226.95v6M219.0 226.95v6" stroke="#8a8a8a" stroke-opacity="0.75" stroke-width="1.4" fill="none"/><path d="M41.6 249.95H197.8M41.6 246.95v6M197.8 246.95v6" stroke="#8a8a8a" stroke-opacity="0.75" stroke-width="1.4" fill="none"/><path d="M43.1 269.95H541.7M43.1 266.95v6M541.7 266.95v6" stroke="#8a8a8a" stroke-opacity="0.75" stroke-width="1.4" fill="none"/><path d="M45.9 309.95H149.5M45.9 306.95v6M149.5 306.95v6" stroke="#8a8a8a" stroke-opacity="0.75" stroke-width="1.4" fill="none"/><path d="M46.4 349.95H188.2M46.4 346.95v6M188.2 346.95v6" stroke="#8a8a8a" stroke-opacity="0.75" stroke-width="1.4" fill="none"/><path d="M2.87 13.37L7.20 26.53M8.07 33.54L5.69 66.36M5.88 73.52L9.99 106.38M9.98 113.52L8.30 126.38M8.24 133.53L9.70 146.37M10.74 153.49L13.04 166.41M14.35 173.49L16.84 186.41M20.60 191.82L47.39 208.08M50.69 213.54L51.48 226.36M51.53 233.55L50.89 246.35M54.11 251.15L104.15 268.75M104.58 272.00L52.76 307.90M49.81 313.55L49.92 346.35" fill="none" stroke="#f41212" stroke-width="1.3"/><circle cx="1.7" cy="9.95" r="3.4" fill="none" stroke="#f41212" stroke-width="1.25"/><path d="M-1.1 26.95l6 6M4.9 26.95l-6 6" stroke="#1a1aee" stroke-width="1.5" fill="none"/><circle cx="8.3" cy="29.95" r="3.4" fill="none" stroke="#f41212" stroke-width="1.25"/><path d="M0.4 66.95l6 6M6.4 66.95l-6 6" stroke="#1a1aee" stroke-width="1.5" fill="none"/><circle cx="5.4" cy="69.95" r="3.4" fill="none" stroke="#f41212" stroke-width="1.25"/><path d="M1.0 106.95l6 6M7.0 106.95l-6 6" stroke="#1a1aee" stroke-width="1.5" fill="none"/><circle cx="10.4" cy="109.95" r="3.4" fill="none" stroke="#f41212" stroke-width="1.25"/><path d="M0.6 126.95l6 6M6.6 126.95l-6 6" stroke="#1a1aee" stroke-width="1.5" fill="none"/><circle cx="7.8" cy="129.95" r="3.4" fill="none" stroke="#f41212" stroke-width="1.25"/><path d="M1.4 146.95l6 6M7.4 146.95l-6 6" stroke="#1a1aee" stroke-width="1.5" fill="none"/><circle cx="10.1" cy="149.95" r="3.4" fill="none" stroke="#f41212" stroke-width="1.25"/><path d="M4.2 166.95l6 6M10.2 166.95l-6 6" stroke="#1a1aee" stroke-width="1.5" fill="none"/><circle cx="13.7" cy="169.95" r="3.4" fill="none" stroke="#f41212" stroke-width="1.25"/><path d="M7.8 186.95l6 6M13.8 186.95l-6 6" stroke="#1a1aee" stroke-width="1.5" fill="none"/><circle cx="17.5" cy="189.95" r="3.4" fill="none" stroke="#f41212" stroke-width="1.25"/><path d="M40.0 206.95l6 6M46.0 206.95l-6 6" stroke="#1a1aee" stroke-width="1.5" fill="none"/><circle cx="50.5" cy="209.95" r="3.4" fill="none" stroke="#f41212" stroke-width="1.25"/><path d="M39.7 226.95l6 6M45.7 226.95l-6 6" stroke="#1a1aee" stroke-width="1.5" fill="none"/><circle cx="51.7" cy="229.95" r="3.4" fill="none" stroke="#f41212" stroke-width="1.25"/><path d="M40.0 246.95l6 6M46.0 246.95l-6 6" stroke="#1a1aee" stroke-width="1.5" fill="none"/><circle cx="50.7" cy="249.95" r="3.4" fill="none" stroke="#f41212" stroke-width="1.25"/><path d="M71.8 266.95l6 6M77.8 266.95l-6 6" stroke="#1a1aee" stroke-width="1.5" fill="none"/><circle cx="107.5" cy="269.95" r="3.4" fill="none" stroke="#f41212" stroke-width="1.25"/><circle cx="49.8" cy="309.95" r="3.4" fill="none" stroke="#f41212" stroke-width="1.25"/><path d="M45.4 346.95l6 6M51.4 346.95l-6 6" stroke="#1a1aee" stroke-width="1.5" fill="none"/><circle cx="49.9" cy="349.95" r="3.4" fill="none" stroke="#f41212" stroke-width="1.25"/></svg>
<div class="b" style="left:1px;top:577px;width:1892px;height:463px;background:#f5f5f5;"></div>
<div class="t" style="top:577.80px;font-size:11px;line-height:15px;color:#333;letter-spacing:0.112px;left:31.00px;">www.pingplotter.com (216.92.151.75) hop 18</div>
<div class="t" style="top:577.80px;font-size:11px;line-height:15px;color:#333;letter-spacing:-0.019px;right:57.00px;">10 minutes (14:18:33 - 14:28:33)</div>
<div class="b" style="left:31px;top:593px;width:1832px;height:24.5px;background:#fcfcfc;box-sizing:border-box;border:1px solid #555;border-right:none;"></div>
<div class="t" style="top:598.00px;font-size:11px;line-height:15px;color:#800000;letter-spacing:-0.368px;right:1893.00px;">35</div>
<div class="t" style="top:620.00px;font-size:11px;line-height:15px;color:#333;letter-spacing:-0.118px;right:1893.00px;">470</div>
<div class="t" style="top:1005.50px;font-size:11px;line-height:15px;color:#333;right:1893.00px;">0</div>
<div class="t" style="top:621.50px;font-size:11px;line-height:15px;color:#c00000;letter-spacing:-0.368px;left:1865.00px;">30</div>
<svg style="left:31px;top:593px;overflow:hidden" width="1832" height="24" viewBox="31 593 1832 24"><path d="M32 603.5H1863" stroke="#444" stroke-width="1" stroke-dasharray="4 5" fill="none"/><rect x="31" y="614.7" width="353" height="2" fill="#800000"/><rect x="521" y="614.7" width="229" height="2" fill="#800000"/><rect x="1009" y="614.7" width="16" height="2" fill="#800000"/><rect x="1086" y="614.7" width="15" height="2" fill="#800000"/><rect x="1177.3" y="614.7" width="137.7" height="2" fill="#800000"/><rect x="1345" y="614.7" width="31.7" height="2" fill="#800000"/><rect x="1741.7" y="614.7" width="15.6" height="2" fill="#800000"/><path d="M1376.7 614.3H1391.7V613H1406.7V605.7H1421.7V598.7H1436.7V597.3H1452.7V596H1467.7V594.3H1483.3V590H1500" stroke="#800000" stroke-width="1.3" fill="none"/><path d="M1620 590H1634V599H1650V607.3H1665.7V610.7H1680V611.3H1695V612.3H1710.7V617H1710.8" stroke="#800000" stroke-width="1.3" fill="none"/><path d="M1757.3 613.3H1786.7V614H1848.3V613H1863" stroke="#800000" stroke-width="1.3" fill="none"/></svg>
<div class="t" style="top:593.05px;font-size:9.5px;line-height:13.5px;color:#800000;letter-spacing:0.162px;left:947.00px;transform:translateX(-50%);">Jitter (ms)</div>
<div class="b" style="left:31px;top:622.8px;width:1832px;height:226.8px;background:#ffd3cf;"></div>
<div class="b" style="left:31px;top:849.6px;width:1832px;height:84.4px;background:#ffebcf;"></div>
<div class="b" style="left:31px;top:934px;width:1832px;height:84px;background:#e0f0d8;"></div>
<svg style="left:0;top:0;overflow:hidden" width="1920" height="1040" viewBox="0 0 1920 1040"><path d="M32 976.5H1863" stroke="#cfdcc8" stroke-width="1"/><path d="M32 934.5H1863" stroke="#cfdcc8" stroke-width="1"/><path d="M32 892.5H1863" stroke="#e3d6bd" stroke-width="1"/><path d="M32 849.5H1863" stroke="#e3d6bd" stroke-width="1"/><path d="M32 807.5H1863" stroke="#e6c4c1" stroke-width="1"/><path d="M32 765.5H1863" stroke="#e6c4c1" stroke-width="1"/><path d="M32 723.5H1863" stroke="#e6c4c1" stroke-width="1"/><path d="M32 681.5H1863" stroke="#e6c4c1" stroke-width="1"/><path d="M32 639.5H1863" stroke="#e6c4c1" stroke-width="1"/><rect x="750" y="622.700" width="244" height="395.300" fill="#fe0000"/><path d="M31.5 622V1018.5H1863" stroke="#555" stroke-width="1" fill="none"/></svg>
<div class="t" style="top:977.20px;font-size:11px;line-height:15px;color:#c6d4c0;letter-spacing:-0.191px;left:32.80px;">50 ms</div>
<div class="t" style="top:935.20px;font-size:11px;line-height:15px;color:#c6d4c0;letter-spacing:-0.079px;left:32.80px;">100 ms</div>
<div class="t" style="top:893.20px;font-size:11px;line-height:15px;color:#dccfb8;letter-spacing:-0.079px;left:32.80px;">150 ms</div>
<div class="t" style="top:850.20px;font-size:11px;line-height:15px;color:#dccfb8;letter-spacing:-0.079px;left:32.80px;">200 ms</div>
<div class="t" style="top:808.20px;font-size:11px;line-height:15px;color:#dfbbb8;letter-spacing:-0.079px;left:32.80px;">250 ms</div>
<div class="t" style="top:766.20px;font-size:11px;line-height:15px;color:#dfbbb8;letter-spacing:-0.079px;left:32.80px;">300 ms</div>
<div class="t" style="top:724.20px;font-size:11px;line-height:15px;color:#dfbbb8;letter-spacing:-0.079px;left:32.80px;">350 ms</div>
<div class="t" style="top:682.20px;font-size:11px;line-height:15px;color:#dfbbb8;letter-spacing:-0.079px;left:32.80px;">400 ms</div>
<div class="t" style="top:640.20px;font-size:11px;line-height:15px;color:#dfbbb8;letter-spacing:-0.079px;left:32.80px;">450 ms</div>
<svg style="left:0;top:0;overflow:hidden" width="1863" height="1040" viewBox="0 0 1863 1040"><path d="M32 924V924H47.7V921.3H61.7V924H78.7V919.7H93.7V924H124.3V921.5H138.7V924H170.3V920H184.7V924H200V922.7H215.7V924H231.7V922.5H246.7V918.3H260.7V924H414V922.7H430V921.5H445V924H506.7V917H520.7V924H536V920H551.7V913.7H566.7V920H581.7V924H628V922.5H643V924H750" stroke="#000" stroke-width="1.2" fill="none" stroke-linejoin="miter"/><rect x="31.4" y="922.9" width="16.9" height="2" fill="#000"/><rect x="47.1" y="920.2" width="15.2" height="2" fill="#000"/><rect x="61.1" y="922.9" width="18.2" height="2" fill="#000"/><rect x="78.1" y="918.6" width="16.2" height="2" fill="#000"/><rect x="93.1" y="922.9" width="31.8" height="2" fill="#000"/><rect x="123.7" y="920.4" width="15.6" height="2" fill="#000"/><rect x="138.1" y="922.9" width="32.8" height="2" fill="#000"/><rect x="169.7" y="919.4" width="15.6" height="2.2" fill="#000"/><rect x="184.1" y="922.9" width="16.5" height="2" fill="#000"/><rect x="199.4" y="921.6" width="16.9" height="2" fill="#000"/><rect x="215.1" y="922.9" width="17.2" height="2" fill="#000"/><rect x="231.1" y="921.4" width="16.2" height="2" fill="#000"/><rect x="260.1" y="922.9" width="154.5" height="2" fill="#000"/><rect x="413.4" y="921.6" width="17.2" height="2" fill="#000"/><rect x="429.4" y="920.4" width="16.2" height="2" fill="#000"/><rect x="444.4" y="922.9" width="62.9" height="2" fill="#000"/><rect x="506.1" y="916.4" width="15.2" height="2.2" fill="#000"/><rect x="520.1" y="922.9" width="16.5" height="2" fill="#000"/><rect x="535.4" y="918.9" width="16.9" height="2" fill="#000"/><rect x="551.1" y="913.1" width="16.2" height="2.2" fill="#000"/><rect x="566.1" y="919.4" width="16.2" height="2.2" fill="#000"/><rect x="581.1" y="922.9" width="47.5" height="2" fill="#000"/><rect x="627.4" y="921.4" width="16.2" height="2" fill="#000"/><rect x="642.4" y="922.9" width="108.2" height="2" fill="#000"/><path d="M994 921V921H1008.7V924H1041V922.3H1054.3V924H1070V920.7H1085.7V924H1147.3V922.3H1161.7V924H1177.3V919.3H1191.7V924H1223.3V922.3H1237.7V924H1330.7V922.3H1344.3V924H1376.7V879.7H1390.7V906.3H1406.7V636.7H1420.7V924H1437.3V894.3H1452.7V860.3H1467.7V775H1481.7V922.5H1497.3V924H1559.3V921H1573.3V924H1650.7V922.3H1665.7V924H1711.7V922.3H1726.7V924H1742.7V883.7H1756.7V924H1849.3V920.3H1863" stroke="#000" stroke-width="1.2" fill="none" stroke-linejoin="miter"/><path d="M994 922.1H1008.7" stroke="#000" stroke-width="1.4" stroke-dasharray="2.2 1.6"/><rect x="994" y="923.8" width="14.7" height="1.4" fill="#000"/><rect x="1008.1" y="922.9" width="33.5" height="2" fill="#000"/><rect x="1040.4" y="921.2" width="14.5" height="2" fill="#000"/><rect x="1053.7" y="922.9" width="16.9" height="2" fill="#000"/><path d="M1070 921.8H1085.7" stroke="#000" stroke-width="1.4" stroke-dasharray="2.2 1.6"/><rect x="1070" y="923.8" width="15.7" height="1.4" fill="#000"/><rect x="1085.1" y="922.9" width="62.8" height="2" fill="#000"/><path d="M1147.3 923.4H1161.7" stroke="#000" stroke-width="1.4" stroke-dasharray="2.2 1.6"/><rect x="1147.3" y="923.8" width="14.4" height="1.4" fill="#000"/><rect x="1161.1" y="922.9" width="16.8" height="2" fill="#000"/><path d="M1177.3 920.4H1191.7" stroke="#000" stroke-width="1.4" stroke-dasharray="2.2 1.6"/><rect x="1177.3" y="923.8" width="14.4" height="1.4" fill="#000"/><rect x="1191.1" y="922.9" width="32.8" height="2" fill="#000"/><path d="M1223.3 923.4H1237.7" stroke="#000" stroke-width="1.4" stroke-dasharray="2.2 1.6"/><rect x="1223.3" y="923.8" width="14.4" height="1.4" fill="#000"/><rect x="1237.1" y="922.9" width="94.2" height="2" fill="#000"/><path d="M1330.7 923.4H1344.3" stroke="#000" stroke-width="1.4" stroke-dasharray="2.2 1.6"/><rect x="1330.7" y="923.8" width="13.6" height="1.4" fill="#000"/><rect x="1343.7" y="922.9" width="33.6" height="2" fill="#000"/><rect x="1376.1" y="879.1" width="15.2" height="2.2" fill="#000"/><rect x="1406.1" y="636.1" width="15.2" height="2.2" fill="#000"/><rect x="1420.1" y="922.9" width="17.8" height="2" fill="#000"/><rect x="1467.1" y="774.4" width="15.2" height="2.2" fill="#000"/><path d="M1481.7 923.6H1497.3" stroke="#000" stroke-width="1.4" stroke-dasharray="2.2 1.6"/><rect x="1481.7" y="923.8" width="15.6" height="1.4" fill="#000"/><rect x="1496.7" y="922.9" width="63.2" height="2" fill="#000"/><rect x="1558.7" y="920.4" width="15.2" height="2.2" fill="#000"/><rect x="1572.7" y="922.9" width="78.6" height="2" fill="#000"/><path d="M1650.7 923.4H1665.7" stroke="#000" stroke-width="1.4" stroke-dasharray="2.2 1.6"/><rect x="1650.7" y="923.8" width="15" height="1.4" fill="#000"/><rect x="1665.1" y="922.9" width="47.2" height="2" fill="#000"/><path d="M1711.7 923.4H1726.7" stroke="#000" stroke-width="1.4" stroke-dasharray="2.2 1.6"/><rect x="1711.7" y="923.8" width="15" height="1.4" fill="#000"/><rect x="1726.1" y="922.9" width="17.2" height="2" fill="#000"/><rect x="1756.1" y="922.9" width="93.8" height="2" fill="#000"/><rect x="1848.7" y="919.7" width="14.9" height="2.2" fill="#000"/></svg>
<svg style="left:0;top:1018px" width="1920" height="6" viewBox="0 0 1920 6"><path d="M111.5 0v3.5" stroke="#444" stroke-width="1"/><path d="M203.5 0v3.5" stroke="#444" stroke-width="1"/><path d="M294.5 0v3.5" stroke="#444" stroke-width="1"/><path d="M386.5 0v3.5" stroke="#444" stroke-width="1"/><path d="M478.5 0v3.5" stroke="#444" stroke-width="1"/><path d="M569.5 0v3.5" stroke="#444" stroke-width="1"/><path d="M661.5 0v3.5" stroke="#444" stroke-width="1"/><path d="M753.5 0v3.5" stroke="#444" stroke-width="1"/><path d="M844.5 0v3.5" stroke="#444" stroke-width="1"/><path d="M936.5 0v3.5" stroke="#444" stroke-width="1"/><path d="M1027.5 0v3.5" stroke="#444" stroke-width="1"/><path d="M1119.5 0v3.5" stroke="#444" stroke-width="1"/><path d="M1211.5 0v3.5" stroke="#444" stroke-width="1"/><path d="M1302.5 0v3.5" stroke="#444" stroke-width="1"/><path d="M1394.5 0v3.5" stroke="#444" stroke-width="1"/><path d="M1486.5 0v3.5" stroke="#444" stroke-width="1"/><path d="M1577.5 0v3.5" stroke="#444" stroke-width="1"/><path d="M1669.5 0v3.5" stroke="#444" stroke-width="1"/><path d="M1760.5 0v3.5" stroke="#444" stroke-width="1"/><path d="M1852.5 0v3.5" stroke="#444" stroke-width="1"/></svg>
<div class="b" style="left:32px;top:1019px;width:1831px;height:18px;overflow:hidden">
<div class="t" style="left:-24.9px;top:0;font-size:11px;line-height:16px;color:#2f4a2a;letter-spacing:0.02px">14:18:30</div>
<div class="t" style="left:66.7px;top:0;font-size:11px;line-height:16px;color:#2f4a2a;letter-spacing:0.02px">14:19:00</div>
<div class="t" style="left:158.3px;top:0;font-size:11px;line-height:16px;color:#2f4a2a;letter-spacing:0.02px">14:19:30</div>
<div class="t" style="left:249.9px;top:0;font-size:11px;line-height:16px;color:#2f4a2a;letter-spacing:0.02px">14:20:00</div>
<div class="t" style="left:341.6px;top:0;font-size:11px;line-height:16px;color:#2f4a2a;letter-spacing:0.02px">14:20:30</div>
<div class="t" style="left:433.2px;top:0;font-size:11px;line-height:16px;color:#2f4a2a;letter-spacing:0.02px">14:21:00</div>
<div class="t" style="left:524.8px;top:0;font-size:11px;line-height:16px;color:#2f4a2a;letter-spacing:0.02px">14:21:30</div>
<div class="t" style="left:616.4px;top:0;font-size:11px;line-height:16px;color:#2f4a2a;letter-spacing:0.02px">14:22:00</div>
<div class="t" style="left:708.0px;top:0;font-size:11px;line-height:16px;color:#2f4a2a;letter-spacing:0.02px">14:22:30</div>
<div class="t" style="left:799.7px;top:0;font-size:11px;line-height:16px;color:#2f4a2a;letter-spacing:0.02px">14:23:00</div>
<div class="t" style="left:891.3px;top:0;font-size:11px;line-height:16px;color:#2f4a2a;letter-spacing:0.02px">14:23:30</div>
<div class="t" style="left:982.9px;top:0;font-size:11px;line-height:16px;color:#2f4a2a;letter-spacing:0.02px">14:24:00</div>
<div class="t" style="left:1074.5px;top:0;font-size:11px;line-height:16px;color:#2f4a2a;letter-spacing:0.02px">14:24:30</div>
<div class="t" style="left:1166.1px;top:0;font-size:11px;line-height:16px;color:#2f4a2a;letter-spacing:0.02px">14:25:00</div>
<div class="t" style="left:1257.8px;top:0;font-size:11px;line-height:16px;color:#2f4a2a;letter-spacing:0.02px">14:25:30</div>
<div class="t" style="left:1349.4px;top:0;font-size:11px;line-height:16px;color:#2f4a2a;letter-spacing:0.02px">14:26:00</div>
<div class="t" style="left:1441.0px;top:0;font-size:11px;line-height:16px;color:#2f4a2a;letter-spacing:0.02px">14:26:30</div>
<div class="t" style="left:1532.6px;top:0;font-size:11px;line-height:16px;color:#2f4a2a;letter-spacing:0.02px">14:27:00</div>
<div class="t" style="left:1624.2px;top:0;font-size:11px;line-height:16px;color:#2f4a2a;letter-spacing:0.02px">14:27:30</div>
<div class="t" style="left:1715.9px;top:0;font-size:11px;line-height:16px;color:#2f4a2a;letter-spacing:0.02px">14:28:00</div>
<div class="t" style="left:1807.5px;top:0;font-size:11px;line-height:16px;color:#2f4a2a;letter-spacing:0.02px">14:28:30</div>
</div>
<div class="t" style="top:813.50px;font-size:11px;line-height:15px;color:#444;letter-spacing:0.052px;left:22.90px;transform:translateX(-50%);transform:translateX(-50%) rotate(-90deg);">Latency (ms)</div>
<div class="t" style="top:820.75px;font-size:10.5px;line-height:14.5px;color:#d84a3c;letter-spacing:0.073px;left:1870.30px;transform:translateX(-50%);transform:translateX(-50%) rotate(90deg);">Packet Loss %</div>
<div class="b" style="left:0px;top:1040px;width:1920px;height:40px;background:#272727;"></div>
<div class="b" style="left:0px;top:1040px;width:1063px;height:40px;background:radial-gradient(ellipse 150px 24px at 930px 44px, rgba(3,5,2,0.9), rgba(3,5,2,0) 100%),radial-gradient(ellipse 170px 20px at 175px 42px, rgba(30,40,12,0.95), rgba(30,40,12,0) 100%),linear-gradient(100deg, rgba(4,6,7,0.96) 0%, rgba(4,6,7,0.92) 14%, rgba(4,6,7,0) 30%),linear-gradient(180deg,#1d270e 0%,#18210c 45%,#0d1306 100%);"></div>
<div class="b" style="left:294px;top:1040px;width:48px;height:40px;background:rgba(255,255,255,0.14);"></div>
<div class="b" style="left:151px;top:1078px;width:40px;height:2px;background:#76b9ed;"></div>
<div class="b" style="left:200px;top:1078px;width:40px;height:2px;background:#76b9ed;"></div>
<div class="b" style="left:294px;top:1078px;width:48px;height:2px;background:#76b9ed;"></div>
<div class="b" style="left:347.5px;top:1078px;width:39.5px;height:2px;background:#76b9ed;"></div>
<svg style="left:16px;top:1052px" width="16" height="16" viewBox="0 0 16 16" fill="#fff"><path d="M0 2.3l6.5-0.9v6.2H0zM7.3 1.3L16 0v7.6H7.3zM0 8.4h6.5v6.2L0 13.7zM7.3 8.4H16V16l-8.7-1.3z"/></svg>
<svg style="left:63px;top:1051px" width="18" height="18" viewBox="0 0 18 18" fill="none" stroke="#fff" stroke-width="1.4"><circle cx="11.3" cy="6.7" r="5.1"/><path d="M7.6 10.4L1 17"/></svg>
<svg style="left:110px;top:1053px" width="21" height="15" viewBox="0 0 21 15" fill="none" stroke="#fff" stroke-width="1.3"><rect x="4.6" y="0.7" width="11.8" height="13.6"/><path d="M2.6 3H0.7v9h1.9M18.4 3h1.9v9h-1.9"/></svg>
<svg style="left:160px;top:1051px" width="22" height="18" viewBox="0 0 22 18"><path d="M0.600 1.200h6.800l1.400 1.500H21.300v14.800H0.600z" fill="#f4cc5d"/><path d="M0.600 4.400h20.700v13.100H0.600z" fill="#fce394"/><path d="M4 10h13.700v7.500h-3.800v-4h-6.100v4H4z" fill="#37a6ee"/><path d="M2 1.900h3.500v1H2z" fill="#fff" opacity="0.8"/></svg>
<svg style="left:209px;top:1049px" width="22" height="22" viewBox="0 0 22 22"><circle cx="11" cy="11" r="11" fill="#4caf50"/><path d="M11 11L1.5 5.5A11 11 0 0 1 20.5 5.5z" fill="#e5352c"/><path d="M11 0A11 11 0 0 1 20.5 5.5H11z" fill="#e5352c"/><path d="M20.5 5.5A11 11 0 0 1 11 22L15.8 11z" fill="#fdd23b"/><path d="M11 11h9.5l-4.8 0z" fill="#fdd23b"/><path d="M11 6h9.7a11 11 0 0 1-9.2 16l4.6-8z" fill="#fdd23b"/><circle cx="11" cy="11" r="5.1" fill="#fff"/><circle cx="11" cy="11" r="4" fill="#4a8af4"/></svg>
<svg style="left:256px;top:1047px" width="26" height="26" viewBox="0 0 26 26"><defs><linearGradient id="lg1" x1="0" y1="0" x2="1" y2="1"><stop offset="0" stop-color="#0c3442"/><stop offset="0.550" stop-color="#1aa0b4"/><stop offset="1" stop-color="#0b3c4c"/></linearGradient><linearGradient id="lg2" x1="0" y1="0" x2="1" y2="0"><stop offset="0" stop-color="#8a6420"/><stop offset="0.450" stop-color="#e6b94f"/><stop offset="1" stop-color="#a87a2a"/></linearGradient></defs><circle cx="13.200" cy="12.800" r="9.800" fill="url(#lg1)" stroke="#a67c2c" stroke-width="1.200"/><path d="M5.300 1.700h5.800v17.500h10.400l-2.200 4.600H5l1.300-2.600V4z" fill="url(#lg2)" stroke="#2a1c06" stroke-width="0.500"/></svg>
<svg style="left:306px;top:1048px" width="24" height="24" viewBox="0 0 24 24"><defs><linearGradient id="pg" x1="0" y1="0" x2="0" y2="1"><stop offset="0" stop-color="#2ba6e2"/><stop offset="1" stop-color="#0f80c4"/></linearGradient></defs><rect width="24" height="24" rx="4.300" fill="url(#pg)"/><path d="M0.100 4.200h8.800l-0.600 2H0.100z" fill="#f2562a"/><path d="M0.100 6.200h8.200l-0.600 1.900H0.100z" fill="#f8931f"/><path d="M0.100 8.100h7.600l-0.700 2.300H0.100z" fill="#f7e11c"/><path d="M0.100 10.400h6.900l-1 3.500H0.100z" fill="#6cbf45"/><circle cx="16.200" cy="8.750" r="4.750" fill="#fff"/><path d="M8.500 14.400L3.800 24H8.900C9.500 21.500 11 20.500 14 20C17 19.500 19 18.500 19.900 17.300C16 18.500 12 17.500 10 15Z" fill="#fff"/></svg>
<svg style="left:355px;top:1050px" width="23" height="20" viewBox="0 0 23 20"><rect x="0.500" y="0.700" width="21.800" height="18.300" fill="#030303" stroke="#9a9a9a"/><rect x="1" y="1.100" width="20.800" height="1.500" fill="#b4b4b4"/><path d="M3.300 4.800l0 4M5.800 5l0 1M5.800 8l0 1M7.800 5l2.500 4M11 9h5.500" stroke="#eee" stroke-width="1.100" fill="none"/><path d="M1 3h20.800v5l-20.800 5z" fill="#fff" opacity="0.100"/></svg>
<svg style="left:1651px;top:1056px" width="12" height="8" viewBox="0 0 12 8" fill="none" stroke="#fff" stroke-width="1.3"><path d="M0.700 7L6 1.500 11.300 7"/></svg>
<svg style="left:1673px;top:1052px" width="17" height="17" viewBox="0 0 17 17"><path d="M1 1.500C4 2.500 9 2.500 12 1v8c0 3-3 5.500-5.500 6.500C4 14.500 1 12 1 9z" fill="#c3152a" stroke="#eee" stroke-width="1"/><path d="M3.500 5l2 5 1.500-3.500L8.500 10l2-5" stroke="#fff" stroke-width="1.200" fill="none"/><rect x="9" y="8.500" width="7.500" height="8" fill="#3a8ee6"/><rect x="12" y="10" width="1.600" height="1.600" fill="#fff"/><rect x="12" y="12.300" width="1.600" height="3.200" fill="#fff"/></svg>
<svg style="left:1697px;top:1054px" width="17" height="13" viewBox="0 0 17 13" fill="none" stroke="#fff" stroke-width="1.200"><rect x="3.500" y="3.500" width="11.500" height="7.500"/><path d="M15 6v2.500h1.500V6z" fill="#fff"/><rect x="5" y="5" width="7" height="4.500" fill="#fff" stroke="none"/><path d="M0.500 2.500h3M2 0.500v4M2 4.500c0 2 1 2.500 2 2.500"/></svg>
<svg style="left:1722px;top:1053px" width="15" height="15" viewBox="0 0 15 15" fill="none" stroke="#8a8a8a" stroke-width="1.300"><path d="M1 14A13 13 0 0 1 14 1" /><path d="M4.500 14A9.500 9.500 0 0 1 14 4.500" stroke="#bdbdbd"/><path d="M8 14A6 6 0 0 1 14 8" stroke="#fff"/><circle cx="12.500" cy="12.500" r="1.600" fill="#fff" stroke="none"/></svg>
<svg style="left:1745px;top:1053px" width="17" height="14" viewBox="0 0 17 14" fill="none" stroke="#fff" stroke-width="1.200"><path d="M0.700 4.700h2.800l3.500-3.500v11.600l-3.500-3.500H0.700z"/><path d="M9.500 4.500c1 1.200 1 3.800 0 5M11.800 2.800c2 2.200 2 6.200 0 8.400M14.100 1c3 3.300 3 8.700 0 12"/></svg>
<div class="t" style="top:1051.50px;font-size:12px;line-height:16px;color:#fff;left:1783.20px;transform:translateX(-50%);transform:translateX(-50%) scaleX(0.81);">CES</div>
<div class="t" style="top:1043.00px;font-size:12px;line-height:16px;color:#fff;letter-spacing:-0.606px;left:1833.70px;transform:translateX(-50%);">14:28</div>
<div class="t" style="top:1060.50px;font-size:12px;line-height:16px;color:#fff;letter-spacing:-0.506px;left:1833.70px;transform:translateX(-50%);">06.09.2017</div>
<svg style="left:1878px;top:1051px" width="26" height="22" viewBox="0 0 26 22"><path d="M1.500 1.500h14.500v11h-9l-3 3v-3h-2.500z" fill="#fff"/><path d="M4 4.500h9.500M4 7h9.500M4 9.500h9.500" stroke="#272727" stroke-width="1"/><circle cx="16.500" cy="16.700" r="7.600" fill="#272727" stroke="#a8a8a8" stroke-width="1"/></svg>
<div class="b" style="left:1915px;top:1040px;width:1px;height:40px;background:#5a5a5a;"></div>
<div class="t" style="top:1060.25px;font-size:11.5px;line-height:15.5px;color:#fff;font-weight:bold;left:1894.60px;transform:translateX(-50%);">3</div>
</body></html>
